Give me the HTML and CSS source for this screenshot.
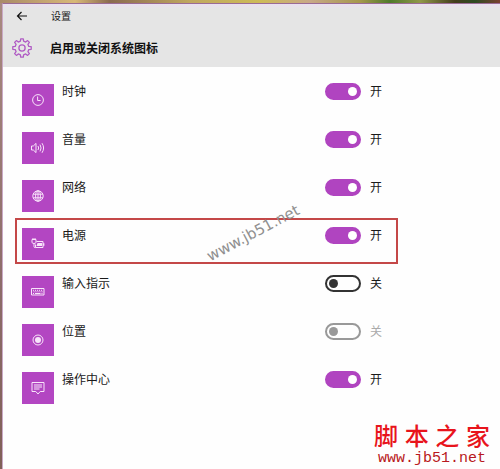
FILE: index.html
```html
<!DOCTYPE html>
<html lang="zh-CN">
<head>
	<meta charset="UTF-8" />
	<meta name="viewport" content="width=device-width, initial-scale=1.0" />
	<title>设置</title>
	<link rel="stylesheet" href="styles.css">
</head>
<body>
	<div class="window">
		<header class="header">
			<div class="titlebar">
				<button class="back" type="button" aria-label="返回">
					<svg width="12" height="10" viewBox="0 0 12 10" fill="none" stroke="#111" stroke-width="1.2">
						<path d="M11 5H1.5M5.5 1L1.5 5l4 4" />
					</svg>
				</button>
				<span>设置</span>
			</div>
			<div class="heading">
				<svg class="gear" width="20" height="20" viewBox="0 0 20 20" fill="none" stroke="#b05cc4" stroke-width="1.3" stroke-linejoin="round">
					<path d="M8.4 3.2L8.7.8h2.6l.3 2.4 2.1.9 1.9-1.5 1.8 1.8-1.5 1.9.9 2.1 2.4.3v2.6l-2.4.3-.9 2.1 1.5 1.9-1.8 1.8-1.9-1.5-2.1.9-.3 2.4H8.700l-.3-2.4-2.1-.9-1.9 1.5-1.8-1.8 1.5-1.9-.9-2.1-2.4-.3V8.7l2.4-.3.9-2.1-1.5-1.9 1.8-1.8 1.9 1.5z" />
					<circle cx="10" cy="10" r="3.1" />
				</svg>
				<h1>启用或关闭系统图标</h1>
			</div>
		</header>

		<main>
			<ul class="list">
				<li class="row">
					<span class="tile">
						<svg width="16" height="16" viewBox="0 0 16 16">
							<circle cx="8" cy="8" r="5.4" />
							<path d="M7.6 4.5v4h3" />
						</svg>
					</span>
					<label for="clock">时钟</label>
					<input class="switch" type="checkbox" role="switch" id="clock" checked>
					<span class="state">开</span>
				</li>
				<li class="row">
					<span class="tile">
						<svg width="16" height="16" viewBox="0 0 16 16">
							<path d="M1.5 6h1.8L6 3.4v9.2L3.3 10H1.5z" />
							<path d="M8 6q1.3 2 0 4M10 4.6q2.2 3.4 0 6.8M12 3.2q3.2 4.8 0 9.6" />
						</svg>
					</span>
					<label for="volume">音量</label>
					<input class="switch" type="checkbox" role="switch" id="volume" checked>
					<span class="state">开</span>
				</li>
				<li class="row">
					<span class="tile">
						<svg width="16" height="16" viewBox="0 0 16 16">
							<circle cx="8" cy="8" r="5.2" />
							<ellipse cx="8" cy="8" rx="2.4" ry="5.2" />
							<path d="M8 2.8v10.4M3.2 6.2h9.6M3.2 9.8h9.6" />
						</svg>
					</span>
					<label for="network">网络</label>
					<input class="switch" type="checkbox" role="switch" id="network" checked>
					<span class="state">开</span>
				</li>
				<li class="row marked">
					<span class="tile">
						<svg width="16" height="16" viewBox="0 0 16 16">
							<path d="M2 3.5h4v2.700q0 1.300-2 1.300t-2-1.300zM3 3.500V2M5 3.500V2M4 7.500v3.200q0 1 1.400 1" />
							<path d="M6.5 5.5H13v6H5.5V8.5" />
							<path class="solid" d="M7.5 7H12v3H6.5zM13 7.300h1.400v2.400H13z" />
						</svg>
					</span>
					<label for="power">电源</label>
					<input class="switch" type="checkbox" role="switch" id="power" checked>
					<span class="state">开</span>
				</li>
				<li class="row">
					<span class="tile">
						<svg width="16" height="16" viewBox="0 0 16 16">
							<path d="M1.5 4.5h12.5v6.5H1.5z" />
							<path stroke-dasharray="1 1" d="M3 6.3h10M3.5 7.8h9" />
							<path d="M3 9.5h1M5 9.5h5.5M11.5 9.5h1" />
						</svg>
					</span>
					<label for="ime">输入指示</label>
					<input class="switch" type="checkbox" role="switch" id="ime">
					<span class="state">关</span>
				</li>
				<li class="row">
					<span class="tile">
						<svg width="16" height="16" viewBox="0 0 16 16">
							<circle cx="8" cy="8" r="5" />
							<circle class="solid" cx="8" cy="8" r="3" />
						</svg>
					</span>
					<label for="location">位置</label>
					<input class="switch" type="checkbox" role="switch" id="location" disabled>
					<span class="state off">关</span>
				</li>
				<li class="row">
					<span class="tile">
						<svg width="16" height="16" viewBox="0 0 16 16">
							<path d="M2 2.5h12v9h-3.8L8 14l-2.2-2.5H2z" />
							<path d="M4 5h8M4 7h8M4 9h5.5" />
						</svg>
					</span>
					<label for="action">操作中心</label>
					<input class="switch" type="checkbox" role="switch" id="action" checked>
					<span class="state">开</span>
				</li>
			</ul>
		</main>
	</div>

	<div class="stamp">www.jb51.net</div>
	<div class="brand">
		<div class="brand-name"><span>脚</span><span>本</span><span>之</span><span>家</span></div>
		<div class="brand-url">www.jb51.net</div>
	</div>
</body>
</html>
```

FILE: styles.css
```css
* {
	box-sizing: border-box;
}

body {
	margin: 0;
	min-height: 100vh;
	display: flex;
	position: relative;
	overflow: hidden;
	padding: 3px 0 0 2px;
	background:
		linear-gradient(90deg, #a98a68, #d8b878 15%, #8a6a50 22%, #c0a860 38%, #cdbb58 52%, #c8a888 62%, #a5984c 72%, #4f7a2c 78%, #91984a 84%, #433c1c 91%, #2d4a22 95%, #7a4030) top / 100% 3px no-repeat,
		linear-gradient(#a98a80, #8d6c6a 60%, #806058);
	color: #1a1a1a;
	font-family: "Noto Sans CJK SC", "Noto Sans", sans-serif;
	font-size: 12px;
	line-height: 16px;
}

.window {
	flex: 1;
	border-top: 1px solid #9a6a96;
	border-left: 1px solid #c9a9c6;
	background: #fefefe;
}

.header {
	height: 63px;
	background: linear-gradient(#eadff0, #e5e5e5 5px);
}

.titlebar {
	display: flex;
	align-items: center;
	gap: 23px;
	height: 24px;
	padding-left: 13px;
	font-size: 10px;
}

.back {
	display: flex;
	padding: 0;
	border: none;
	background: none;
}

.heading {
	display: flex;
	align-items: center;
	gap: 18px;
	height: 40px;
	padding-left: 9px;
}

h1 {
	margin: 0;
	color: #111;
	font-size: 12px;
	font-weight: bold;
}

.list {
	display: grid;
	gap: 2px;
	max-width: 395px;
	margin: 0;
	padding: 7px 0 0 12px;
	list-style: none;
}

.row {
	display: flex;
	align-items: flex-start;
	height: 46px;
	padding: 7px 10px 0 5px;
	border: 2px solid transparent;
}

.marked {
	border-color: #c44848;
}

.tile {
	display: flex;
	align-items: center;
	justify-content: center;
	width: 32px;
	height: 32px;
	margin-top: 1px;
	background: #b346c2;
}

.tile svg {
	fill: none;
	stroke: #f8e4fa;
	stroke-width: 1;
}

.tile .solid {
	fill: #f8e4fa;
	stroke: none;
}

.row label {
	flex: 1;
	padding-left: 8px;
}

.switch {
	appearance: none;
	display: flex;
	align-items: center;
	width: 36px;
	height: 17px;
	margin: 0 9px 0 0;
	padding: 0 3px;
	border: 2px solid #333;
	border-radius: 9px;
	background: #fefefe;
}

.switch::before {
	content: "";
	width: 9px;
	height: 9px;
	border-radius: 50%;
	background: #333;
}

.switch:not(:checked) {
	padding: 0 2px;
}

.switch:checked {
	justify-content: flex-end;
	padding: 0 2px;
	border-color: #b044c0;
	background: #b044c0;
}

.switch:checked::before {
	background: #fff;
}

.switch:disabled {
	border-color: #999;
}

.switch:disabled::before {
	background: #999;
}

.state {
	width: 16px;
}

.off {
	color: #aaa;
}

.stamp {
	position: absolute;
	left: 202px;
	top: 223px;
	color: #909090;
	font-family: "DejaVu Sans", Verdana, sans-serif;
	font-size: 15px;
	line-height: 20px;
	transform: rotate(-28deg);
}

.brand {
	position: absolute;
	right: 10px;
	bottom: 3px;
	width: 116px;
	color: #e8141c;
}

.brand-name {
	display: flex;
	justify-content: space-between;
	font-size: 24px;
	font-weight: 500;
	line-height: 34px;
}

.brand-url {
	color: #b81820;
	font-family: "Liberation Mono", monospace;
	font-size: 15px;
	line-height: 14px;
	text-align: center;
}
```
